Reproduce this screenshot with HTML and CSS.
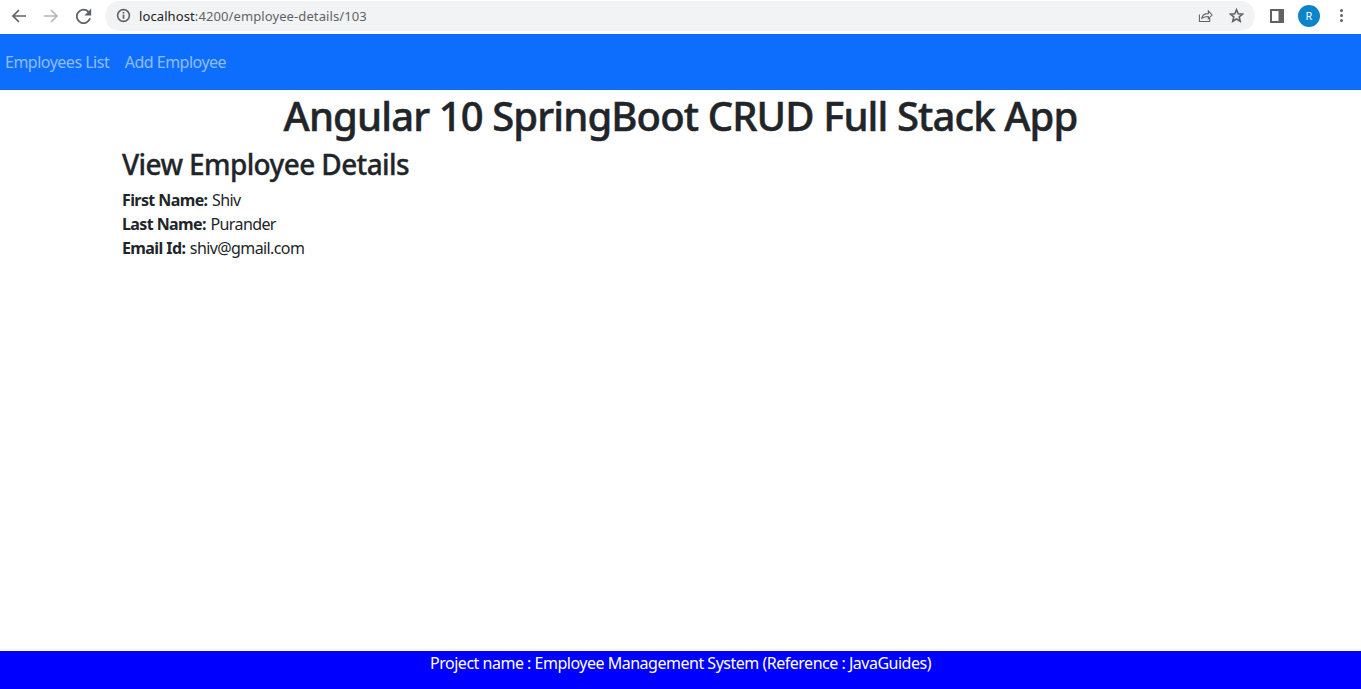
FILE: index.html
```html
<!DOCTYPE html>
<html lang="en">
<head>
    <meta charset="UTF-8">
    <meta name="viewport" content="width=device-width, initial-scale=1.0">
    <title>Angular 10 SpringBoot CRUD Full Stack App</title>
    <link rel="stylesheet" href="styles.css">
</head>
<body>
    <div class="toolbar">
        <svg class="tool-icon back" viewBox="0 0 16 16"><path d="M15 8H2.500M8 2L2 8l6 6" fill="none" stroke="currentColor" stroke-width="1.7"/></svg>
        <svg class="tool-icon forward" viewBox="0 0 16 16"><path d="M1 8h12.500M8 2l6 6-6 6" fill="none" stroke="currentColor" stroke-width="1.7"/></svg>
        <svg class="tool-icon reload" viewBox="1.300 0.500 14 14"><path d="M13.600 9.500A5.900 5.900 0 1 1 12.200 3.800" fill="none" stroke="currentColor" stroke-width="1.600"/><path d="M14.600 1v6h-6z" fill="currentColor"/></svg>
        <div class="omnibox">
            <svg class="info-icon" viewBox="0 0 16 16"><circle cx="8" cy="8" r="6.300" fill="none" stroke="currentColor" stroke-width="1.700"/><path d="M7.100 7h1.800v4.500H7.100zM7.100 4.200h1.800v1.600H7.100z" fill="currentColor"/></svg>
            <span class="url"><span class="host">localhost</span>:4200/employee-details/103</span>
            <svg class="share-icon" viewBox="0 0 16 16"><path d="M1.500 7v7.500h11V11M4 11c.5-3.500 3-5 7-5V3l4 4.500-4 4V9c-3 0-5 .5-7 2z" fill="none" stroke="currentColor" stroke-width="1.100"/></svg>
            <svg class="star-icon" viewBox="0 0 16 16"><path d="M8 1.800l1.800 4.300 4.700.4-3.600 3 1.100 4.600L8 11.700l-4 2.400 1.100-4.600-3.600-3 4.700-.4z" fill="none" stroke="currentColor" stroke-width="1.700"/></svg>
        </div>
        <svg class="panel-icon" viewBox="0 0 14 14"><path d="M0 0h14v14H0z" fill="#5f6368"/><path d="M2 2h6.500v10H2z" fill="#fff"/></svg>
        <div class="avatar">R</div>
        <div class="menu-dots"><i></i><i></i><i></i></div>
    </div>

    <nav class="navbar">
        <a href="#">Employees List</a>
        <a href="#">Add Employee</a>
    </nav>

    <main class="content">
        <h1>Angular 10 SpringBoot CRUD Full Stack App</h1>
        <div class="container">
            <h2>View Employee Details</h2>
            <div class="row"><b>First Name:</b> Shiv</div>
            <div class="row"><b>Last Name:</b> Purander</div>
            <div class="row"><b>Email Id:</b> shiv@gmail.com</div>
        </div>
    </main>

    <footer class="footer">Project name : Employee Management System (Reference : JavaGuides)</footer>
</body>
</html>
```

FILE: styles.css
```css
html, body {
    height: 100%;
}
body {
    margin: 0;
    display: flex;
    flex-direction: column;
    height: 689px;
    overflow: hidden;
    font-family: "Noto Sans", "Open Sans", sans-serif;
    font-size: 16px;
    color: #212529;
    background-color: #fff;
}
.toolbar {
    display: flex;
    align-items: center;
    height: 33px;
    margin-bottom: 1px;
    padding-left: 11px;
    padding-bottom: 2px;
    box-sizing: border-box;
    flex-shrink: 0;
}
.tool-icon {
    width: 16px;
    height: 16px;
    margin-right: 16px;
}
.back {
    color: #5f6368;
}
.forward {
    color: #b5b7ba;
    margin-right: 17px;
}
.reload {
    color: #5f6368;
    margin-right: 13px;
}
.omnibox {
    display: flex;
    align-items: center;
    width: 1150px;
    height: 30px;
    box-sizing: border-box;
    padding-left: 11px;
    background-color: #f1f3f4;
    border-radius: 15px;
    color: #5f6368;
}
.info-icon {
    width: 15px;
    height: 15px;
    margin-right: 8px;
}
.url {
    flex: 1;
    font-size: 13px;
    letter-spacing: 0.1px;
    color: #5f6368;
}
.host {
    color: #202124;
}
.share-icon {
    width: 15px;
    height: 15px;
    margin-right: 16px;
}
.star-icon {
    width: 15px;
    height: 15px;
    margin-right: 11px;
}
.panel-icon {
    width: 14px;
    height: 14px;
    margin-left: 15px;
}
.avatar {
    width: 22px;
    height: 22px;
    margin-left: 14px;
    border-radius: 50%;
    background-color: #0b84c9;
    color: #fff;
    font-size: 11px;
    line-height: 22px;
    text-align: center;
}
.menu-dots {
    display: flex;
    flex-direction: column;
    gap: 2px;
    margin-left: 20px;
}
.menu-dots i {
    width: 3px;
    height: 3px;
    border-radius: 50%;
    background-color: #5f6368;
}
.navbar {
    display: flex;
    align-items: center;
    gap: 15.5px;
    height: 56px;
    padding-left: 5px;
    background-color: #0d6efd;
    flex-shrink: 0;
}
.navbar a {
    color: rgba(255, 255, 255, 0.55);
    text-decoration: none;
    letter-spacing: -0.5px;
}
.content {
    flex: 1;
}
h1 {
    margin: 0 0 8px;
    padding-top: 2px;
    font-size: 40px;
    font-weight: 500;
    line-height: 47px;
    text-align: center;
    letter-spacing: -0.88px;
    -webkit-text-stroke: 0.5px #212529;
}
.container {
    width: 1117px;
    margin: 0 auto;
}
h2 {
    margin: 0 0 7px;
    padding-top: 1px;
    font-size: 28px;
    font-weight: 500;
    line-height: 33px;
    letter-spacing: -0.62px;
    -webkit-text-stroke: 0.3px #212529;
}
.row {
    line-height: 24px;
    letter-spacing: -0.6px;
}
.row b {
    margin-right: 1px;
}
.footer {
    height: 38px;
    background-color: #00f;
    color: #fff;
    line-height: 24px;
    text-align: center;
    letter-spacing: -0.49px;
    flex-shrink: 0;
}
```
